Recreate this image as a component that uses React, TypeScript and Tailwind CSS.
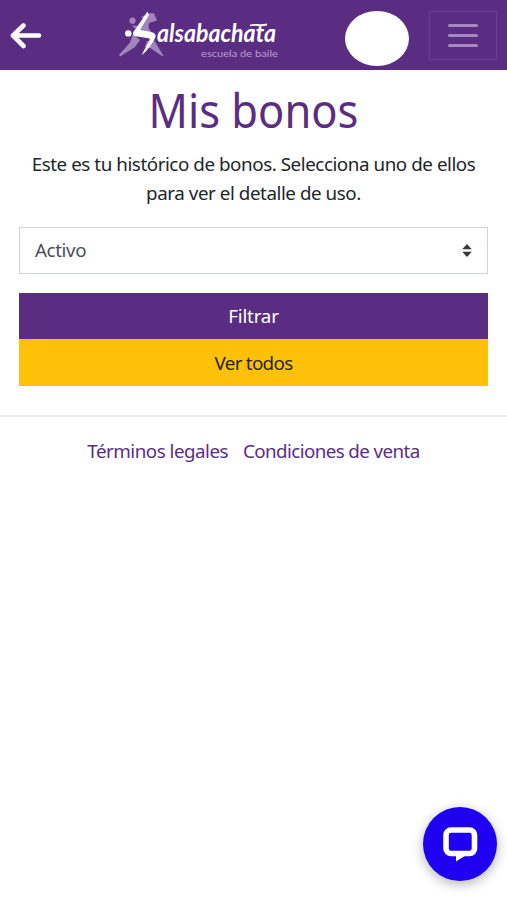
import React from 'react';

const BackArrow: React.FC = () => (
  <svg width="32" height="28" viewBox="0 0 32 28" fill="none" aria-hidden="true">
    <path d="M13.500 4.500 3 14.500l10.500 10.500M3.500 14.500H29" stroke="#fff" strokeWidth="4.600" strokeLinecap="round" strokeLinejoin="round" />
  </svg>
);

const Logo: React.FC = () => (
  <svg width="164" height="50" viewBox="0 0 164 50" role="img" aria-label="Salsabachata">
    {/* Dancers */}
    <g fill="#a184bd">
      <circle cx="14.500" cy="10.700" r="3.100" />
      <path d="M13 15.500 20 16l5-7.500-2-1.500 3-1.500L33 3l3 .5 3 7-8 2.500-.5 5 3.500 5-14-1.500-3-3.500z" />
      <path d="M15 24 22 30 17 37 2 46.500 1 45l11-12.500zM29 31l7-1 9.500 16-1.500 0L33 38.500l-6-2z" />
    </g>
    <circle cx="10.300" cy="23.400" r="3.200" fill="#fff" />
    <path d="M29.500 1.500 31 5 22 20l10 1.700c5.500 1 7 3.800 4.300 7.800C33 35 29.500 41 23.500 45L31.500 30.500c.7-1.300.3-2-1.200-2.200L18 26.300c-3.300-.6-3.800-2.800-2-5.300C20.500 15 25 8 29.500 1.500z" fill="#fff" />
    <text
      x="39"
      y="31.500"
      fill="#fff"
      textLength="119"
      lengthAdjust="spacingAndGlyphs"
      className="font-['Lato'] text-[24px] font-bold italic"
    >
      alsabachata
    </text>
    <path d="M132 15.500c5-1.500 9 .5 17-1" stroke="#fff" strokeWidth="1.800" fill="none" />
    <text
      x="83"
      y="46.500"
      fill="#b79fcd"
      textLength="77"
      lengthAdjust="spacingAndGlyphs"
      className="font-['Lato'] text-[10px]"
    >
      escuela de baile
    </text>
  </svg>
);

const Header: React.FC = () => (
  <header className="flex h-[70px] items-center bg-[#5a2d82]">
    <a href="#" aria-label="Volver" className="ml-[10px]">
      <BackArrow />
    </a>
    <a href="#" className="ml-[76px]">
      <Logo />
    </a>
    <div className="ml-[63px] mt-[7px] h-[55px] w-[64px] rounded-[50%] bg-white" />
    <button
      type="button"
      aria-label="Menú"
      className="ml-[20px] flex h-[49px] w-[68px] flex-col items-center justify-center gap-[7px] border border-[#6b4290]"
    >
      <span className="h-[3px] w-[30px] rounded-full bg-[#a587c1]" />
      <span className="h-[3px] w-[30px] rounded-full bg-[#a587c1]" />
      <span className="h-[3px] w-[30px] rounded-full bg-[#a587c1]" />
    </button>
  </header>
);

const StatusSelect: React.FC = () => (
  <button
    type="button"
    className="mt-[18px] flex h-[47px] w-full items-center justify-between border border-[#ced4da] pl-[15px] pr-[15px] text-[#495057]"
  >
    <span className="pt-[2px] tracking-[-0.4px]">Activo</span>
    <svg width="10" height="13" viewBox="0 0 10 13" fill="#343a40" aria-hidden="true">
      <path d="M5 0 9.800 5.200H.2zM5 13 .2 7.800h9.600z" />
    </svg>
  </button>
);

const ChatButton: React.FC = () => (
  <button
    type="button"
    aria-label="Chat"
    className="fixed bottom-[19px] right-[10px] flex h-[74px] w-[74px] items-center justify-center rounded-full bg-[#2000f0] shadow-[0_3px_12px_rgba(0,0,0,0.3)]"
  >
    <svg width="36" height="36" viewBox="0 0 36 36" aria-hidden="true">
      <rect x="4" y="4" width="28.500" height="23.500" rx="5" fill="none" stroke="#fff" strokeWidth="5.600" />
      <path d="M14 26v9.500L23.500 29.500V26z" fill="#fff" />
    </svg>
  </button>
);

export default function App() {
  return (
    <div className="min-h-screen bg-white font-['Noto_Sans',sans-serif] text-[18.800px] leading-[29.300px] text-[#212529]">
      <Header />

      <main className="px-[19px] pt-[11px]">
        <h1 className="scale-x-[0.925] text-center text-[47px] leading-[59px] text-[#5a2d82]">Mis bonos</h1>
        <p className="mt-[10px] text-center tracking-[-0.440px]">
          Este es tu histórico de bonos. Selecciona uno de ellos
          <br />
          para ver el detalle de uso.
        </p>
        <StatusSelect />
        <div className="mt-[19px] flex flex-col">
          <button type="button" className="h-[46px] bg-[#5a2d82] pt-[3px] tracking-[-0.2px] text-white">
            Filtrar
          </button>
          <button type="button" className="h-[47px] bg-[#ffc107] pt-[3px] tracking-[-0.7px]">
            Ver todos
          </button>
        </div>
      </main>

      <footer className="mt-[29px] flex justify-center gap-[15px] border-t-2 border-[#ededed] pt-[20px] text-[#5a2d82]">
        <a href="#" className="tracking-[-0.5px]">Términos legales</a>
        <a href="#" className="tracking-[-0.6px]">Condiciones de venta</a>
      </footer>

      <ChatButton />
    </div>
  );
}
